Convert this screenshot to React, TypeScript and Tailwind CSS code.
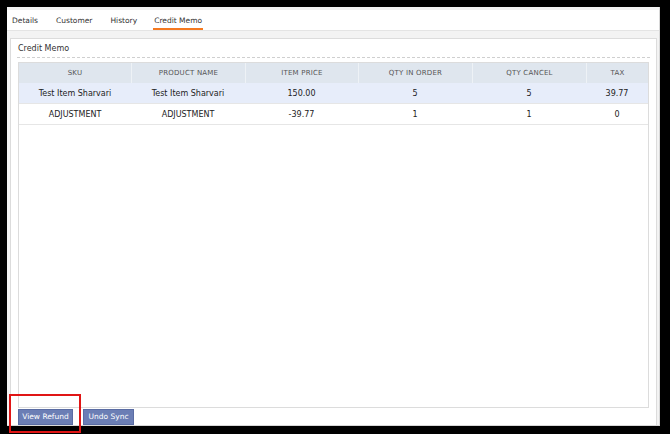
import React from "react";

const cols = [
  { label: "SKU", w: "w-[112px]" },
  { label: "PRODUCT NAME", w: "w-[114px]" },
  { label: "ITEM PRICE", w: "w-[113px]" },
  { label: "QTY IN ORDER", w: "w-[114px]" },
  { label: "QTY CANCEL", w: "w-[114px]" },
  { label: "TAX", w: "flex-1" },
];

const rows = [
  ["Test Item Sharvari", "Test Item Sharvari", "150.00", "5", "5", "39.77"],
  ["ADJUSTMENT", "ADJUSTMENT", "-39.77", "1", "1", "0"],
];

export default function App() {
  const font = { fontFamily: '"DejaVu Sans", Verdana, sans-serif' };
  return (
    <div className="w-[670px] h-[434px] bg-black pt-[7px] pl-[7px] pr-[10px] pb-[8px] relative" style={font}>
      <div className="w-full h-full bg-white flex flex-col border-r border-b border-[#d8d8d8]">
        {/* tabs */}
        <div className="h-[3px] bg-[#f2f2f2]" />
        <div className="h-[21px] flex items-end pl-[3px] gap-[14px] text-[7.5px] leading-[10px] text-[#333] border-b border-[#e4e4e4]">
          <div className="px-[2px] pb-[4px]">Details</div>
          <div className="px-[2px] pb-[4px]">Customer</div>
          <div className="px-[2px] pb-[4px]">History</div>
          <div className="px-[1px] pb-[2px] border-b-2 border-[#f47920]">Credit Memo</div>
        </div>
        <div className="flex-1 bg-[#f3f3f3] pt-[7px] pl-[3px] pr-[2px] flex flex-col">
          <div className="flex-1 bg-white border-l border-t border-r border-[#dcdcdc] flex flex-col px-[6px]">
            <div className="h-[19px] border-b border-dashed border-[#cfcfcf] flex items-center pl-[1px] pt-[1px] text-[8px] text-[#333]">
              Credit Memo
            </div>
            <div className="mt-[4px] mx-[1px] h-[346px] border border-[#dcdcdc] flex flex-col">
              <div className="flex h-[20px] bg-[#dfe6ee]">
                {cols.map((c, i) => (
                  <div
                    key={i}
                    className={`${c.w} flex items-center justify-center text-[7px] text-[#555] tracking-[0.2px] ${i > 0 ? "border-l border-[#eef2f6]" : ""}`}
                  >
                    {c.label}
                  </div>
                ))}
              </div>
              {rows.map((r, ri) => (
                <div
                  key={ri}
                  className={`flex h-[21px] pt-[1px] border-b border-[#e6e6e6] ${ri === 0 ? "bg-[#e7edfa]" : "bg-white"}`}
                >
                  {r.map((v, i) => (
                    <div
                      key={i}
                      className={`${cols[i].w} flex items-center justify-center text-[8px] text-[#222]`}
                    >
                      {v}
                    </div>
                  ))}
                </div>
              ))}
            </div>
            <div className="flex pt-[1px] pl-[1px]">
              <div className="w-[55px] h-[16px] flex items-center justify-center bg-[#6b7eb5] text-white text-[7.5px] border border-[#5a6ca3]">
                View Refund
              </div>
              <div className="ml-[10px] w-[51px] h-[16px] flex items-center justify-center bg-[#6b7eb5] text-white text-[7.5px] border border-[#5a6ca3]">
                Undo Sync
              </div>
            </div>
          </div>
        </div>
      </div>
      <div className="absolute left-[9px] top-[394px] w-[72px] h-[39px] border-2 border-[#e01515]" />
    </div>
  );
}
